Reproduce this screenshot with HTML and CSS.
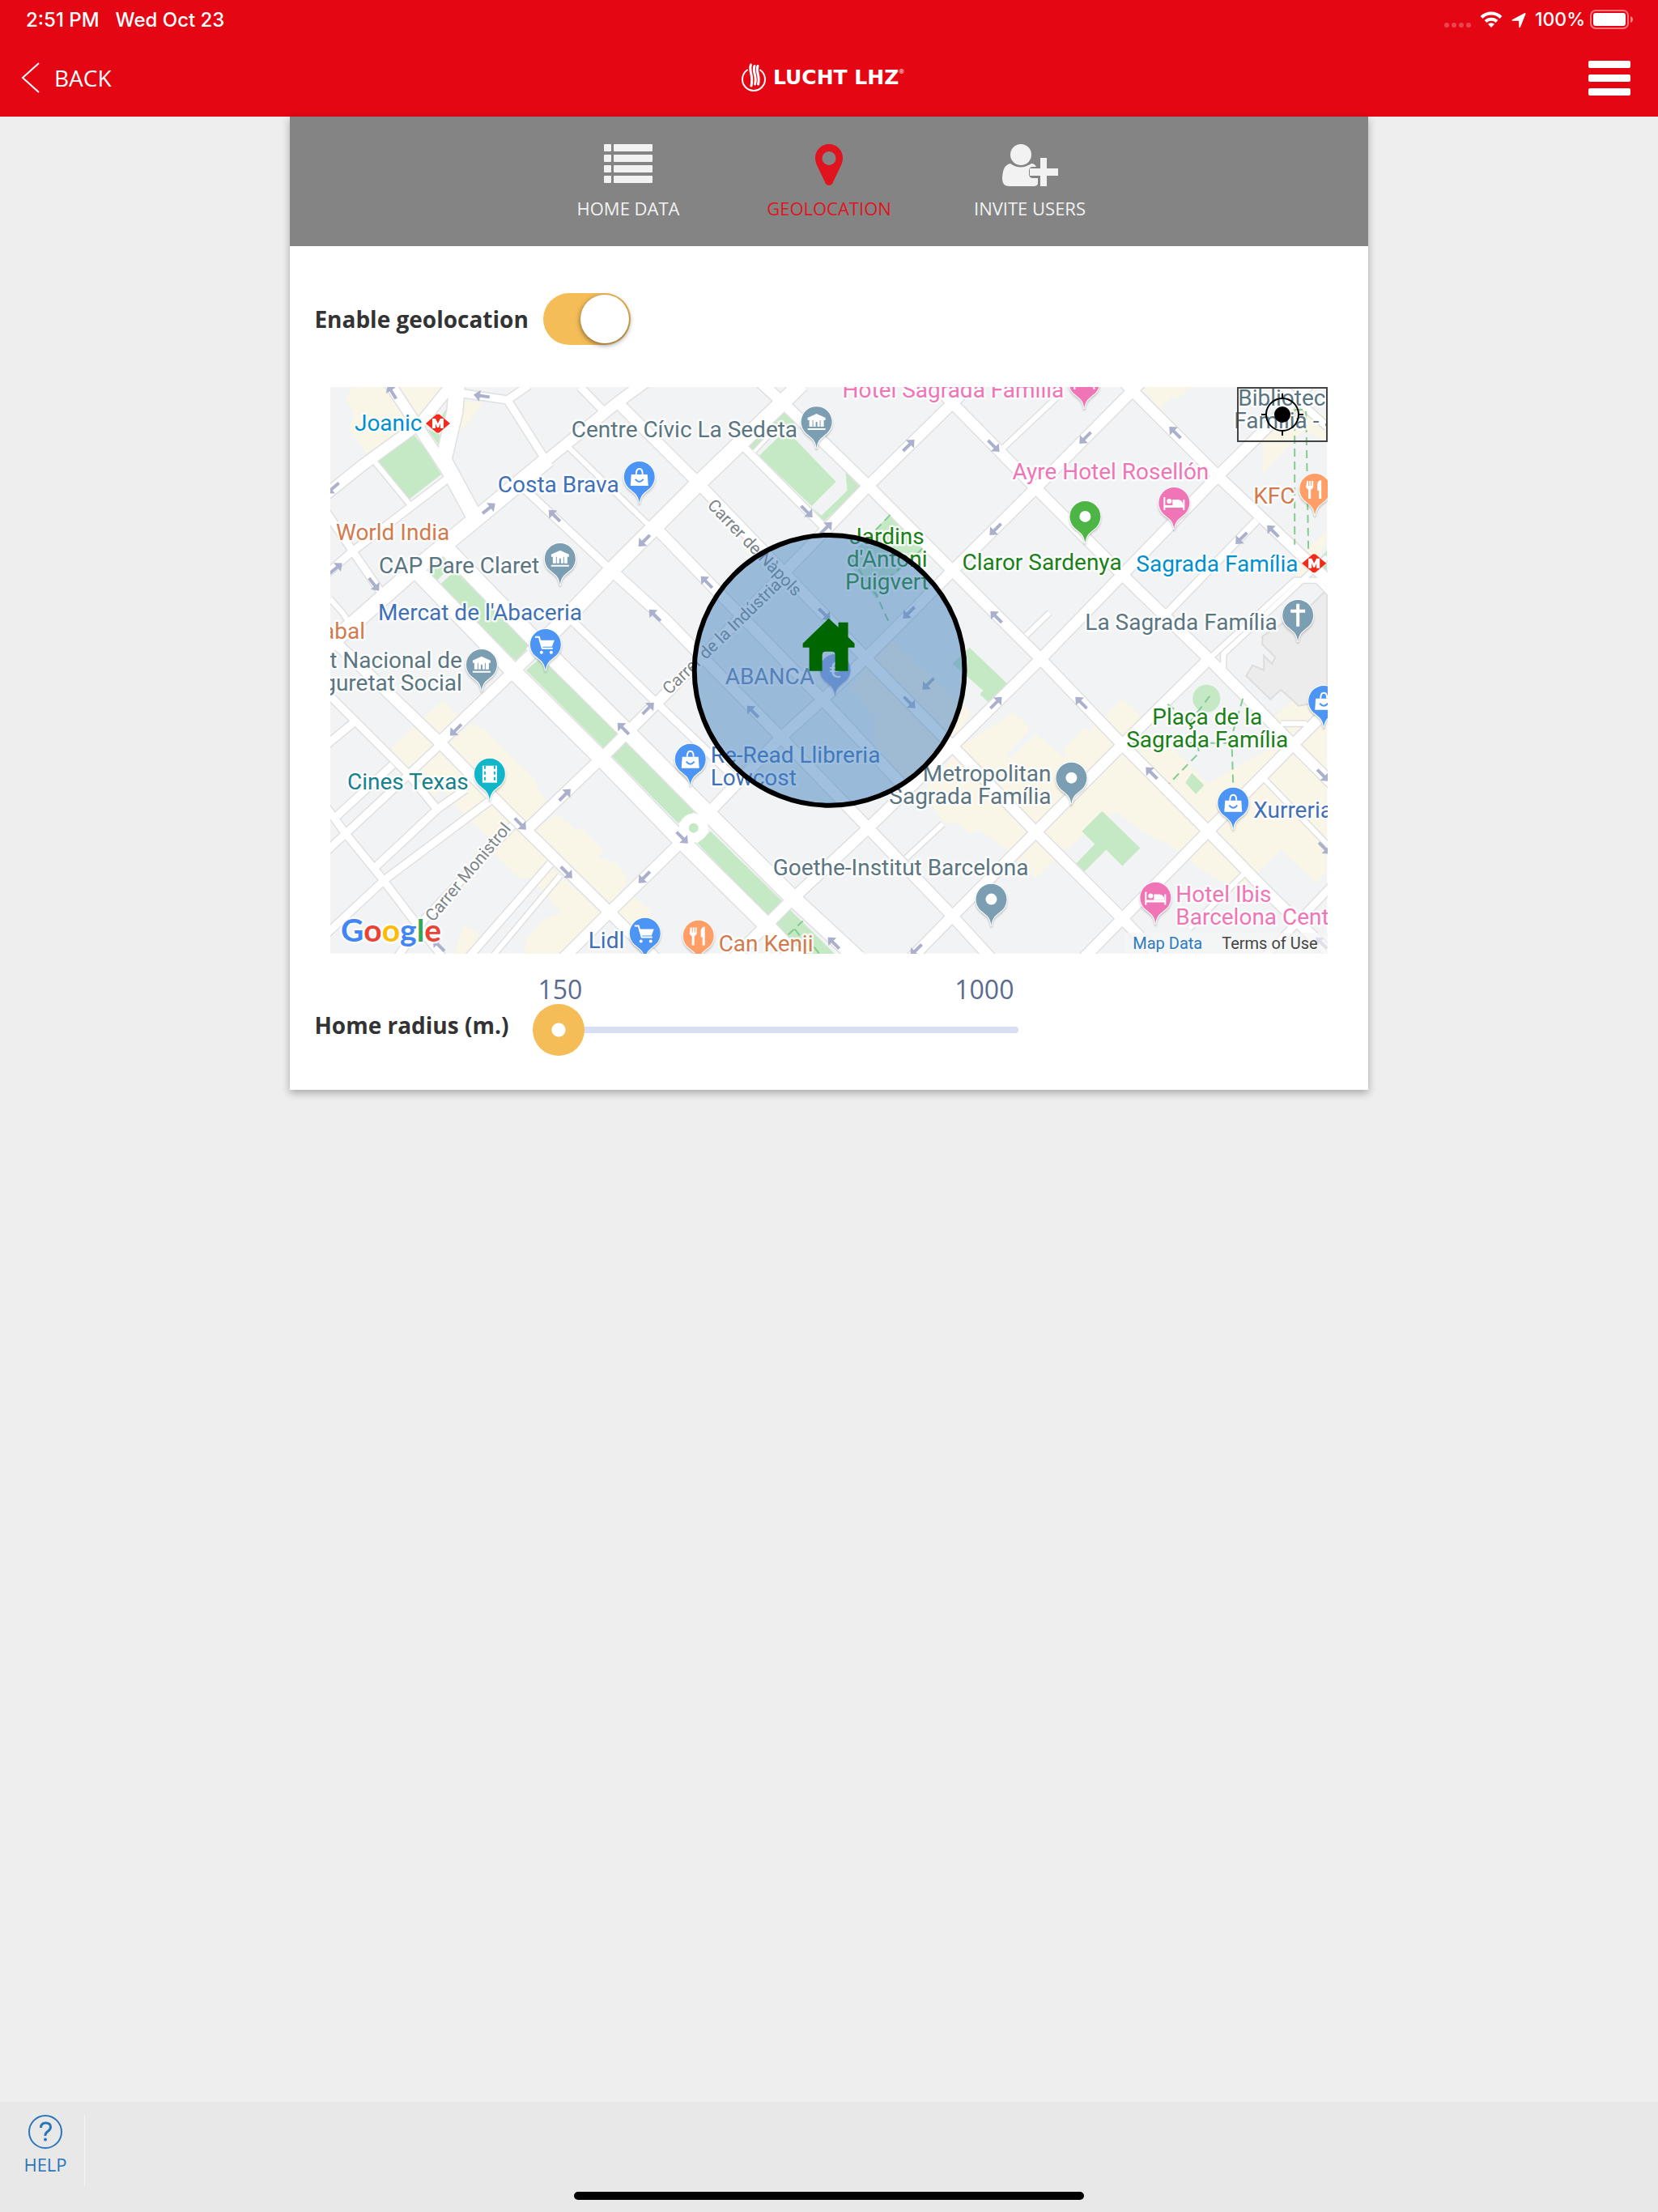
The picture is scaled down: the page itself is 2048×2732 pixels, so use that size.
FILE: index.html
```html
<!DOCTYPE html>
<html lang="en">
<head>
  <meta charset="UTF-8">
  <meta name="viewport" content="width=device-width, initial-scale=1.0">
  <title>Lucht LHZ - Geolocation</title>
  <link rel="stylesheet" href="styles.css">
</head>
<body>

  <header class="header">
    <div class="status-bar">
      <div class="status-left">
        <span>2:51 PM</span>
        <span>Wed Oct 23</span>
      </div>
      <div class="status-right">
        <svg class="status-dots" width="34" height="24" viewBox="0 0 34 24"><g fill="#fff" opacity=".25"><circle cx="3" cy="19" r="3"/><circle cx="12" cy="19" r="3"/><circle cx="21" cy="19" r="3"/><circle cx="30" cy="19" r="3"/></g></svg>
        <svg width="28" height="24" viewBox="0 0 28 24"><g fill="none" stroke="#fff" stroke-width="4"><path d="M2 9.500a17 17 0 0 1 24 0"/><path d="M7 14.500a10 10 0 0 1 14 0"/></g><path d="M14 22l-4-4.200a6 6 0 0 1 8 0z" fill="#fff"/></svg>
        <svg width="20" height="24" viewBox="0 0 20 24"><path d="M1.500 12.500L17 4.200q2-.7 1.400 1.300L12 21.500q-1.400 1.500-1.800-.5V13.800H2.500q-2-.3-1-1.300z" fill="#fff"/></svg>
        <span class="battery-text">100%</span>
        <svg width="54" height="24" viewBox="0 0 54 24"><rect x="1" y="1" width="46" height="22" rx="6" fill="none" stroke="#fff" stroke-width="2" opacity=".45"/><rect x="4" y="4" width="40" height="16" rx="3" fill="#fff"/><path d="M50 8q3 1 3 4t-3 4z" fill="#fff" opacity=".5"/></svg>
      </div>
    </div>
    <div class="title-bar">
      <a class="back" href="#">
        <svg width="23" height="40" viewBox="0 0 23 40"><path d="M22 2L2 20l20 18" fill="none" stroke="#fff" stroke-width="2"/></svg>
        <span>BACK</span>
      </a>
      <div class="logo">
        <svg width="32" height="36" viewBox="0 0 32 36"><g fill="none" stroke="#fff" stroke-linecap="round"><path d="M8 8.500a14 14 0 1 0 16 0" stroke-width="2"/><path d="M12.500 2c-3 8 3.500 12 .5 26M17 3.500c-3 8 3.500 11 .5 22.500M21 3.500c-3 8 3.500 11 .5 22.500" stroke-width="3"/></g></svg>
        <span class="logo-text">LUCHT LHZ</span><span class="logo-mark">®</span>
      </div>
      <button class="menu" type="button" aria-label="Menu">
        <span></span><span></span><span></span>
      </button>
    </div>
  </header>

  <main class="main">
    <section class="card">
      <nav class="tabs">
        <a class="tab" href="#">
          <svg width="60" height="52" viewBox="0 0 60 52" fill="currentColor"><rect width="9" height="9" rx="1"/><rect x="12" width="48" height="9" rx="1"/><rect y="13" width="9" height="9" rx="1"/><rect x="12" y="13" width="48" height="9" rx="1"/><rect y="26" width="9" height="9" rx="1"/><rect x="12" y="26" width="48" height="9" rx="1"/><rect y="39" width="9" height="9" rx="1"/><rect x="12" y="39" width="48" height="9" rx="1"/></svg>
          <span>HOME DATA</span>
        </a>
        <a class="tab active" href="#">
          <svg width="34" height="52" viewBox="0 0 34 52" fill="currentColor"><path fill-rule="evenodd" d="M17 0A17 17 0 0 0 0 17c0 4 1 7 2 9l11 23q4 4 8 0l11-23c1-2 2-5 2-9A17 17 0 0 0 17 0zm0 9a8.500 8.500 0 1 1 0 17a8.500 8.500 0 0 1 0-17z"/></svg>
          <span>GEOLOCATION</span>
        </a>
        <a class="tab" href="#">
          <svg width="69" height="52" viewBox="0 0 69 52" fill="currentColor"><circle cx="23" cy="13" r="13"/><path d="M10 24q13 9 26 0q4 0 6 4h-4q-5 0-5 5v4q0 5 5 5h6v7q-1 3-5 3H9q-9 0-9-9q0-17 10-19z"/><path d="M47 17h8v13h14v9H55v13h-8V39H34v-9h13z"/></svg>
          <span>INVITE USERS</span>
        </a>
      </nav>

      <div class="card-body">
        <div class="form-row">
          <label for="geolocation">Enable geolocation</label>
          <input class="toggle" type="checkbox" id="geolocation" checked>
        </div>

        <div class="map">
          <svg class="map-canvas" viewBox="408 478 1232 700">
            <defs>
              <path id="pin" d="M0 33C-1 22-6 20-13 14A19 19 0 1 1 13 14C6 20 1 22 0 33z"/>
              <path id="arrow" d="M-10-2H2V-7L10 0L2 7V2H-10z"/>
              <g id="bank" fill="#fff"><path d="M-11-5L0-10L11-5V-2H-11z"/><path d="M-9-3h4v9h-4zM-4-3h8v3h-8zM5-3h4v9h-4zM-4 0h3v6h-3zM1 0h3v6h-3zM-11 8h22v2h-22z"/></g>
              <g id="bag"><path d="M-10-3H10L11 11H-11z" fill="#fff"/><path d="M-4-3Q-4-10 0-10T4-3" fill="none" stroke="#fff" stroke-width="2"/><path d="M-5 3Q0 9 5 3" fill="none" stroke="#4c95f4" stroke-width="2"/></g>
              <g id="cart"><path d="M-13-9h5L-4 5H9" fill="none" stroke="#fff" stroke-width="2"/><path d="M-8-5H11L8 3H-5z" fill="#fff"/><circle cx="-5" cy="10" r="2" fill="#fff"/><circle cx="7" cy="10" r="2" fill="#fff"/></g>
              <g id="bed" fill="#fff"><path d="M-13-7h2V3H11V-4h2V9h-2V6H-11V9h-2z"/><circle cx="-6" cy="-2" r="3"/><path d="M-2-4H5Q11-3 11 3H-2z"/></g>
              <g id="fork" fill="#fff"><path d="M-10-10h2v6h1v-6h2v6h1v-6h2v8l-3 3v11h-3V1l-3-3zM3-6Q4-11 8-11V12H5V2H3z"/></g>
              <g id="metro"><path d="M-15 0L-2-11Q0-12 2-11L15 0L2 11Q0 12-2 11z" fill="#f22b1a"/><path d="M-7 6V-6h4L0 0L3-6H7V6H3V0L1 5H-1L-3 0V6z" fill="#fff"/></g>
              <!-- street network, drawn once for the edges and once for the surface -->
              <g id="streets" fill="none">
                <g class="street w4"><path d="M932 558L962 526"/></g>
                <g class="street w7">
                  <path d="M460 567L506 623M408 740L423 757L433 772M703 553L803 650M1120 1060L1165 1018M1240 553L1310 487M1297 757L1268 785M1537 1080L1470 1147M692 1082L610 1180M1563 963L1640 1043"/>
                  <path d="M1493 815L1600 717H1628L1660 750M1512 828V808L1640 688M1583 894H1615"/>
                </g>
                <g class="street w10">
                  <path d="M572 486L627 494L672 565M627 494L653 476M552 592L433 683L400 712M400 628L437 683L475 738M717 478L750 512"/>
                  <path d="M400 852L440 892L505 957L540 1000M400 923L440 890M400 993L427 1030L470 1083L515 1142L548 1184M607 988L475 1087L400 1157M463 1072L540 1000L575 975M412 1012L485 945M633 1020L525 1135L490 1184M680 1067L578 1184"/>
                  <path d="M547 917L473 987L400 1055M920 553L1020 653M703 763L813 870L912 965M1440 760L1553 643M1565 1180L1650 1090M1585 478L1640 527M647 603L758 707"/>
                </g>
                <g class="street w13">
                  <path d="M480 472L515 525L548 575M562 470L520 522L450 573L400 613M763 497L863 597L1070 813L1177 922L1280 1028L1387 1135L1440 1190"/>
                  <path d="M758 707L820 763L967 913L1073 1023L1177 1132L1230 1190M815 657L1018 866L1115 970M400 780L463 840L543 917L627 1003L753 1127L810 1184"/>
                  <path d="M935 468L967 497L1073 600L1177 705L1285 813L1387 920L1493 1027L1567 1103L1650 1184M1150 470L1177 498L1280 603L1387 710L1493 813L1598 920L1650 972M1385 468L1505 588L1620 697L1650 725"/>
                  <path d="M653 1023L750 930L813 867L960 717L1073 600L1177 498L1205 470M690 1190L753 1127L840 1042L873 1007L963 913L1018 863L1070 813L1177 705L1280 603L1410 472"/>
                  <path d="M900 1190L947 1143L980 1110L1073 1023L1177 922L1287 813L1387 710L1505 588L1587 507L1620 472M1120 1190L1177 1132L1280 1028L1387 920L1493 815M1333 1190L1387 1135L1493 1027L1598 920L1650 868M547 913L657 808"/>
                  <path d="M800 470L763 497L677 567"/>
                </g>
                <g class="street w18">
                  <path d="M565 468L562 508L548 568L587 640M677 567L593 637L513 703L437 770L400 802M550 676L660 790L773 902L877 1007L980 1110L1060 1184M517 708L630 825L743 937L843 1040L947 1143L990 1190M657 808L700 763L757 703L863 597L967 497L990 474"/>
                </g>
              </g>
            </defs>

            <rect class="land" x="408" y="478" width="1232" height="700"/>
            <!-- built-up areas -->
            <g class="built">
              <path d="M435 478H475L513 523L453 560L430 530L438 513L427 493zM492 478H550L517 515zM572 495L597 497L582 518L565 537z"/>
              <path d="M547 865L567 885L543 910L523 887zM510 898L537 920L502 950L480 927zM583 893L600 903L662 963L665 975L677 993L653 1020L553 920z"/>
              <path d="M543 930L583 967L600 987L627 1010L680 1063L660 1085L642 1086L608 1053L610 1040L582 1015L560 993L548 975L533 985L510 960z"/>
              <path d="M688 1005L713 1027L717 1022L745 1050L740 1060L760 1065L777 1087L753 1120L660 1027zM660 1090L680 1070L690 1080L673 1102zM690 1080L745 1130L700 1180H648L650 1160L670 1137L693 1127L677 1110zM573 1143L592 1153L580 1180H560zM760 1127L783 1107L805 1127L790 1170z"/>
              <path d="M1050 850L1100 790L1200 880L1177 920L1120 970L1080 930L1080 885zM1190 920L1253 880L1273 900L1244 933L1250 936L1280 907L1318 937L1314 925L1340 899L1347 903L1387 863L1430 905L1493 968L1560 900L1600 862L1640 880V1075L1627 1092L1583 1050L1555 1078L1532 1102L1487 1076L1440 1040L1430 1038L1405 1022L1378 1003L1310 1055L1280 1085L1245 1050L1210 1025L1200 1030L1180 1015L1168 1018L1140 980z"/>
              <path d="M1410 478H1472L1456 492L1450 490L1433 505zM1560 586V530L1590 500L1640 512V545L1610 532zM1590 700L1640 655V670L1610 715z"/>
            </g>
            <path class="land" d="M1493 830L1590 912L1493 968L1430 905L1400 910z"/>
            <path class="site" d="M1560 786L1620 748L1640 728V866L1605 872L1583 852L1570 864L1540 835L1548 822L1562 828V810L1572 820L1576 812L1560 796z"/>
            <!-- parks -->
            <g class="park">
              <path d="M463 567L508 533L526 555L545 586L505 617zM555 500L546 513L549 525zM528 530L544 537L541 548zM525 707L547 688L557 700L538 719zM543 723L562 705L655 798L637 816zM650 828L668 813L765 907L747 925zM755 933L773 917L858 1003L838 1017zM862 1042L878 1027L966 1113L948 1132zM957 1142L975 1123L1033 1180H993z"/>
              <path d="M923 552L957 518L963 523L933 560zM957 518L968 505L988 530L970 526zM938 563L970 532L980 540L1033 595L1003 625zM1045 583L1063 602L1018 644L1005 628L1015 637L1047 606z"/>
              <path d="M1100 635L1143 680L1103 712L1083 740L1052 700L1050 687zM1177 820L1198 800L1245 845L1222 868L1211 858L1215 853z"/>
              <path d="M1362 1002L1409 1048L1387 1070L1367 1050L1340 1077L1330 1067L1353 1043L1337 1027zM1473 955L1488 970L1478 981L1465 967zM1627 695L1640 680V718z"/>
              <circle cx="1491" cy="863" r="17"/>
            </g>
            <use class="edges" href="#streets"/>
            <use class="surface" href="#streets"/>
            <circle cx="857" cy="1023" r="18" fill="#fff"/>
            <circle class="park" cx="857" cy="1023" r="6"/>
            <path class="path" d="M1100 636L1080 657M1140 678L1100 712M1052 690L1083 735L1100 772M1443 870L1473 893L1482 930L1445 968M1495 860L1470 893M1536 863L1522 910L1524 970M1400 918H1520M1600 506V673M1600 506H1614L1617 682M974 1155L992 1138M982 1148L990 1158M1006 1170L1012 1178"/>

            <!-- one way arrows -->
            <g class="arrows">
              <use href="#arrow" transform="translate(484 484)rotate(-122)"/>
              <use href="#arrow" transform="translate(595 489)rotate(188)"/>
              <use href="#arrow" transform="translate(411 603)rotate(140)"/>
              <use href="#arrow" transform="translate(604 628)rotate(-38)"/>
              <use href="#arrow" transform="translate(685 637)rotate(-135)"/>
              <use href="#arrow" transform="translate(415 702)rotate(-40)"/>
              <use href="#arrow" transform="translate(462 722)rotate(52)"/>
              <use href="#arrow" transform="translate(796 668)rotate(135)"/>
              <use href="#arrow" transform="translate(809 760)rotate(-135)"/>
              <use href="#arrow" transform="translate(563 902)rotate(135)"/>
              <use href="#arrow" transform="translate(801 875)rotate(-45)"/>
              <use href="#arrow" transform="translate(770 900)rotate(-135)"/>
              <use href="#arrow" transform="translate(698 982)rotate(-45)"/>
              <use href="#arrow" transform="translate(643 1018)rotate(45)"/>
              <use href="#arrow" transform="translate(700 1078)rotate(45)"/>
              <use href="#arrow" transform="translate(796 1084)rotate(135)"/>
              <use href="#arrow" transform="translate(843 1035)rotate(45)"/>
              <use href="#arrow" transform="translate(1123 550)rotate(-45)"/>
              <use href="#arrow" transform="translate(1228 551)rotate(45)"/>
              <use href="#arrow" transform="translate(1341 541)rotate(135)"/>
              <use href="#arrow" transform="translate(1452 534)rotate(-135)"/>
              <use href="#arrow" transform="translate(1230 654)rotate(135)"/>
              <use href="#arrow" transform="translate(1534 665)rotate(135)"/>
              <use href="#arrow" transform="translate(1573 656)rotate(-135)"/>
              <use href="#arrow" transform="translate(997 632)rotate(45)"/>
              <use href="#arrow" transform="translate(1021 652)rotate(-45)"/>
              <use href="#arrow" transform="translate(873 719)rotate(-135)"/>
              <use href="#arrow" transform="translate(1019 759)rotate(45)"/>
              <use href="#arrow" transform="translate(1123 757)rotate(135)"/>
              <use href="#arrow" transform="translate(930 879)rotate(-135)"/>
              <use href="#arrow" transform="translate(1147 845)rotate(135)"/>
              <use href="#arrow" transform="translate(1124 868)rotate(45)"/>
              <use href="#arrow" transform="translate(1231 762)rotate(-135)"/>
              <use href="#arrow" transform="translate(1231 868)rotate(-45)"/>
              <use href="#arrow" transform="translate(1336 868)rotate(-135)"/>
              <use href="#arrow" transform="translate(1423 955)rotate(-135)"/>
              <use href="#arrow" transform="translate(1635 958)rotate(45)"/>
              <use href="#arrow" transform="translate(1637 1048)rotate(45)"/>
              <use href="#arrow" transform="translate(542 1168)rotate(-135)"/>
              <use href="#arrow" transform="translate(1030 1165)rotate(-135)"/>
              <use href="#arrow" transform="translate(1132 1174)rotate(135)"/>
              <use href="#arrow" transform="translate(1633 1165)rotate(-135)"/>
            </g>

            <!-- street names -->
            <g class="street-name">
              <text transform="translate(873 625)rotate(46)">Carrer de Nàpols</text>
              <text transform="translate(827 859)rotate(-44)">Carrer de la Indústria</text>
              <text transform="translate(535 1140)rotate(-50)">Carrer Monistrol</text>
            </g>

            <!-- places -->
            <g class="place">
              <text class="transit" x="438" y="532">Joanic</text>
              <text class="shop" x="615" y="608">Costa Brava</text>
              <text class="food" x="415" y="667">World India</text>
              <text class="civic" x="468" y="708">CAP Pare Claret</text>
              <text class="shop" x="467" y="766">Mercat de l'Abaceria</text>
              <text class="food" x="451" y="789" text-anchor="end">abal</text>
              <text class="civic" x="571" y="825" text-anchor="end">t Nacional de</text>
              <text class="civic" x="571" y="853" text-anchor="end">guretat Social</text>
              <text class="cinema" x="429" y="975">Cines Texas</text>
              <text class="shop" x="727" y="1171">Lidl</text>
              <text class="civic" x="706" y="540">Centre Cívic La Sedeta</text>
              <text class="hotel" x="1041" y="491">Hotel Sagrada Família</text>
              <text class="green" x="1096" y="672" text-anchor="middle">Jardins</text>
              <text class="green" x="1096" y="700" text-anchor="middle">d'Antoni</text>
              <text class="green" x="1096" y="728" text-anchor="middle">Puigvert</text>
              <text class="green" x="1189" y="704">Claror Sardenya</text>
              <text class="hotel" x="1251" y="592">Ayre Hotel Rosellón</text>
              <text class="food" x="1549" y="622">KFC</text>
              <text class="transit" x="1404" y="706">Sagrada Família</text>
              <text class="civic" x="1341" y="778">La Sagrada Família</text>
              <text class="civic" x="1530" y="501">Bibliotec</text>
              <text class="civic" x="1525" y="529">Família - J</text>
              <text class="green" x="1492" y="895" text-anchor="middle">Plaça de la</text>
              <text class="green" x="1492" y="923" text-anchor="middle">Sagrada Família</text>
              <text class="shop" x="1549" y="1010">Xurreria</text>
              <text class="hotel" x="1453" y="1114">Hotel Ibis</text>
              <text class="hotel" x="1453" y="1142">Barcelona Cent</text>
              <text class="civic" x="1299" y="965" text-anchor="end">Metropolitan</text>
              <text class="civic" x="1299" y="993" text-anchor="end">Sagrada Família</text>
              <text class="civic" x="955" y="1081">Goethe-Institut Barcelona</text>
              <text class="bank" x="896" y="845">ABANCA</text>
              <text class="shop" x="878" y="942">Re-Read Llibreria</text>
              <text class="shop" x="878" y="970">Lowcost</text>
              <text class="food" x="888" y="1175">Can Kenji</text>
            </g>

            <g class="pins">
              <g class="civic-pin">
                <use href="#pin" x="1009" y="521"/><use href="#bank" x="1009" y="521"/>
                <use href="#pin" x="692" y="690"/><use href="#bank" x="692" y="690"/>
                <use href="#pin" x="595" y="821"/><use href="#bank" x="595" y="821"/>
                <use href="#pin" x="1604" y="760"/><path d="M1602 746h4v7h7v4h-7v17h-4v-17h-7v-4h7z" class="glyph"/>
                <use href="#pin" x="1324" y="961"/><circle class="glyph" cx="1324" cy="961" r="7"/>
                <use href="#pin" x="1225" y="1111"/><circle class="glyph" cx="1225" cy="1111" r="7"/>
              </g>
              <g class="shop-pin">
                <use href="#pin" x="790" y="589"/><use href="#bag" x="790" y="589"/>
                <use href="#pin" x="674" y="796"/><use href="#cart" x="674" y="796"/>
                <use href="#pin" x="797" y="1153"/><use href="#cart" x="797" y="1153"/>
                <use href="#pin" x="853" y="938"/><use href="#bag" x="853" y="938"/>
                <use href="#pin" x="1636" y="866"/><use href="#bag" x="1636" y="866"/>
                <use href="#pin" x="1524" y="992"/><use href="#bag" x="1524" y="992"/>
              </g>
              <g class="bank-pin"><use href="#pin" x="1032" y="827"/><text class="euro" x="1032" y="837" text-anchor="middle">€</text></g>
              <g class="hotel-pin">
                <use href="#pin" x="1340" y="472"/><use href="#bed" x="1340" y="472"/>
                <use href="#pin" x="1451" y="621"/><use href="#bed" x="1451" y="621"/>
                <use href="#pin" x="1428" y="1109"/><use href="#bed" x="1428" y="1109"/>
              </g>
              <g class="food-pin">
                <use href="#pin" x="863" y="1156"/><use href="#fork" x="863" y="1156"/>
                <use href="#pin" x="1625" y="604"/><use href="#fork" x="1625" y="604"/>
              </g>
              <g class="green-pin"><use href="#pin" x="1341" y="638"/><circle class="glyph" cx="1341" cy="638" r="7"/></g>
              <g class="cinema-pin"><use href="#pin" x="605" y="956"/><path class="glyph" d="M596 946h18v21h-18z"/><path class="film" d="M599 946V967M611 946V967"/></g>
              <use href="#metro" x="541" y="523"/>
              <use href="#metro" x="1624" y="696"/>
            </g>

            <!-- home area -->
            <circle class="home-area" cx="1025" cy="828" r="167"/>
            <path class="home-icon" d="M1024 764L1036 775V769H1048V787L1056 795V800H1048V829H1032V809Q1032 805 1028 805H1020Q1016 805 1016 809V829H1000V800H992V795z"/>

            <text class="google" x="421" y="1163"><tspan fill="#4285f4">G</tspan><tspan fill="#ea4335">o</tspan><tspan fill="#fbbc05">o</tspan><tspan fill="#4285f4">g</tspan><tspan fill="#34a853">l</tspan><tspan fill="#ea4335">e</tspan></text>
          </svg>
          <button class="locate" type="button" aria-label="Center map">
            <svg width="56" height="56" viewBox="0 0 56 56"><circle cx="28" cy="28" r="10"/><circle cx="28" cy="28" r="20" fill="none" stroke="#000" stroke-width="2"/><path d="M28 2v7M28 47v7M2 28h7M47 28h7" stroke="#000" stroke-width="2"/></svg>
          </button>
          <div class="map-links">
            <a class="map-data" href="#">Map Data</a>
            <a href="#">Terms of Use</a>
          </div>
        </div>

        <div class="form-row radius-row">
          <label for="radius">Home radius (m.)</label>
          <div class="slider">
            <div class="slider-values"><span>150</span><span>1000</span></div>
            <input type="range" id="radius" min="150" max="1000" value="150">
          </div>
        </div>
      </div>
    </section>
  </main>

  <footer class="footer">
    <a class="help" href="#">
      <svg width="42" height="42" viewBox="0 0 42 42"><circle cx="21" cy="21" r="20" fill="none" stroke="#2a76b9" stroke-width="2"/><path d="M15.500 16q0-6 6-6t6 5q0 3-3.500 5.500t-3 5.500" fill="none" stroke="#2a76b9" stroke-width="3"/><circle cx="21" cy="30.500" r="2" fill="#2a76b9"/></svg>
      <span>HELP</span>
    </a>
    <div class="home-indicator"></div>
  </footer>

</body>
</html>
```

FILE: styles.css
```css
* {
  box-sizing: border-box;
}

body {
  font-family: "Open Sans", sans-serif;
  margin: 0;
  min-height: 100vh;
  display: flex;
  flex-direction: column;
  background-color: #eeeeee;
  color: #333;
}

a {
  text-decoration: none;
  color: inherit;
}

svg {
  display: block;
}

/* Header */
.header {
  height: 144px;
  background-color: #e40613;
  color: #fff;
}

.status-bar {
  height: 48px;
  padding: 0 30px 0 32px;
  display: flex;
  justify-content: space-between;
  align-items: center;
  font-family: Inter, sans-serif;
  font-size: 24px;
  font-weight: 500;
}

.status-left {
  display: flex;
  gap: 20px;
}

.status-right {
  display: flex;
  align-items: center;
  gap: 10px;
}

.battery-text {
  font-size: 23px;
  margin-right: -4px;
}

.title-bar {
  height: 96px;
  padding: 0 34px 0 26px;
  display: grid;
  grid-template-columns: 1fr auto 1fr;
  align-items: center;
}

.back {
  display: flex;
  align-items: center;
  gap: 18px;
  font-size: 28px;
}

.logo {
  display: flex;
  align-items: center;
  margin-left: -8px;
}

.logo-text {
  font-family: "DejaVu Sans", sans-serif;
  font-size: 25px;
  font-weight: bold;
  line-height: 30px;
  margin-left: 8px;
}

.logo-mark {
  font-size: 8px;
  align-self: flex-start;
  margin-top: 4px;
}

.menu {
  justify-self: end;
  display: flex;
  flex-direction: column;
  gap: 8px;
  width: 52px;
  padding: 0;
  border: 0;
  background: none;
  cursor: pointer;
}

.menu span {
  height: 9px;
  border-radius: 2px;
  background-color: #fff;
}

/* Card */
.main {
  flex: 1;
}

.card {
  width: 65%;
  margin: 0 auto;
  background-color: #fff;
  box-shadow: 0 4px 10px rgba(0, 0, 0, 0.3);
}

.tabs {
  height: 160px;
  padding-top: 34px;
  display: flex;
  justify-content: center;
  background-color: #848484;
  color: #f2f2f2;
}

.tab {
  width: 248px;
  display: flex;
  flex-direction: column;
  align-items: center;
  gap: 12px;
  font-size: 22px;
  line-height: 30px;
}

.tab.active {
  color: #e0141e;
}

.card-body {
  padding: 58px 30px 42px;
}

.form-row {
  display: flex;
  align-items: center;
  gap: 18px;
}

label {
  font-size: 28px;
  font-weight: bold;
}

.toggle {
  appearance: none;
  width: 108px;
  height: 64px;
  margin: 0;
  padding: 2px;
  display: flex;
  border-radius: 32px;
  background-color: #ccc;
  cursor: pointer;
}

.toggle::before {
  content: "";
  width: 60px;
  height: 60px;
  border-radius: 50%;
  background-color: #fff;
  box-shadow: 0 2px 6px rgba(0, 0, 0, 0.5);
}

.toggle:checked {
  justify-content: flex-end;
  background-color: #f4bd57;
}

.radius-row {
  align-items: flex-end;
  gap: 30px;
}

.radius-row label {
  line-height: 76px;
}

.slider {
  width: 600px;
}

.slider-values {
  display: flex;
  justify-content: space-between;
  padding: 0 6px;
  font-size: 32px;
  line-height: 36px;
  color: #5b6b8f;
}

.slider input {
  appearance: none;
  display: block;
  width: 100%;
  height: 64px;
  margin: 0;
  background: none;
}

.slider input::-webkit-slider-runnable-track {
  height: 8px;
  border-radius: 4px;
  background-color: #d8dff2;
}

.slider input::-webkit-slider-thumb {
  appearance: none;
  width: 64px;
  height: 64px;
  margin-top: -28px;
  border-radius: 50%;
  background: radial-gradient(circle, #fff 8px, #f4bd57 9px);
}

/* Map */
.map {
  position: relative;
  margin: 52px 20px 26px;
  overflow: hidden;
}

.map-canvas {
  width: 100%;
  font-family: Roboto, sans-serif;
}

.land {
  fill: #f1f3f4;
}

.built {
  fill: #f9f5e7;
}

.site {
  fill: #ececec;
  stroke: #dddddd;
  stroke-width: 2;
}

.park {
  fill: #c5e8c5;
}

.path {
  fill: none;
  stroke: #84cc90;
  stroke-width: 2;
  stroke-dasharray: 10 6;
}

.edges {
  stroke: #e0e0e0;
  --edge: 3px;
}

.surface {
  stroke: #fff;
  --edge: 0px;
}

.street {
  stroke-linejoin: round;
}

.w4 { stroke-width: calc(4px + var(--edge)); }
.w7 { stroke-width: calc(6px + var(--edge)); }
.w10 { stroke-width: calc(9px + var(--edge)); }
.w13 { stroke-width: calc(13px + var(--edge)); }
.w18 { stroke-width: calc(19px + var(--edge)); }

.arrows {
  fill: #abb0cd;
}

.place,
.street-name,
.google {
  paint-order: stroke;
  stroke: rgba(255, 255, 255, 0.8);
  stroke-width: 5px;
  stroke-linejoin: round;
}

.place {
  font-size: 28px;
}

.street-name {
  font-size: 21px;
  fill: #7d8589;
}

.google {
  font-family: Lato, sans-serif;
  font-size: 39px;
  font-weight: bold;
}

.transit { fill: #0090d1; }
.shop { fill: #3f70b8; }
.bank { fill: #6d7fb0; }
.food { fill: #d17b4e; }
.civic { fill: #5b7581; }
.cinema { fill: #17818c; }
.hotel { fill: #f075b6; }
.green { fill: #1b8018; }

.pins use[href="#pin"] {
  stroke: #fff;
  stroke-width: 2px;
  paint-order: stroke;
  filter: drop-shadow(0 2px 1px rgba(0, 0, 0, 0.2));
}

.civic-pin { fill: #7b9eb2; }
.shop-pin { fill: #4c95f4; }
.bank-pin { fill: #8a9fe0; }
.hotel-pin { fill: #f075b6; }
.food-pin { fill: #ff9e67; }
.green-pin { fill: #4db546; }
.cinema-pin { fill: #13b5c8; }

.bank-pin use[href="#pin"] {
  stroke: none;
}

.glyph,
.euro {
  fill: #fff;
}

.euro {
  font-size: 28px;
}

.film {
  stroke: #13b5c8;
  stroke-width: 2px;
  stroke-dasharray: 4 3;
}

.home-area {
  fill: rgba(67, 129, 192, 0.5);
  stroke: #000;
  stroke-width: 6px;
}

.home-icon {
  fill: #006600;
}

.locate {
  position: absolute;
  top: 0;
  right: 0;
  width: 112px;
  height: 68px;
  padding: 0;
  display: flex;
  align-items: center;
  justify-content: center;
  border: 2px solid #444;
  background: none;
  cursor: pointer;
}

.map-links {
  position: absolute;
  right: 0;
  bottom: 0;
  padding: 0 12px 0 10px;
  display: flex;
  gap: 24px;
  font-family: Roboto, sans-serif;
  font-size: 20px;
  line-height: 26px;
  color: #444;
  background-color: rgba(245, 245, 245, 0.7);
}

.map-data {
  color: #2e7bbf;
}

/* Footer */
.footer {
  position: relative;
  height: 136px;
  padding-top: 16px;
  background-color: #e8e8e8;
}

.help {
  width: 105px;
  height: 88px;
  padding: 0 0 0 8px;
  display: flex;
  flex-direction: column;
  align-items: center;
  gap: 4px;
  border-right: 1px solid #f4f4f4;
  font-size: 22px;
  line-height: 30px;
  color: #2a76b9;
}

.home-indicator {
  position: absolute;
  left: 50%;
  bottom: 15px;
  width: 630px;
  height: 10px;
  margin-left: -315px;
  border-radius: 5px;
  background-color: #000;
}
```
